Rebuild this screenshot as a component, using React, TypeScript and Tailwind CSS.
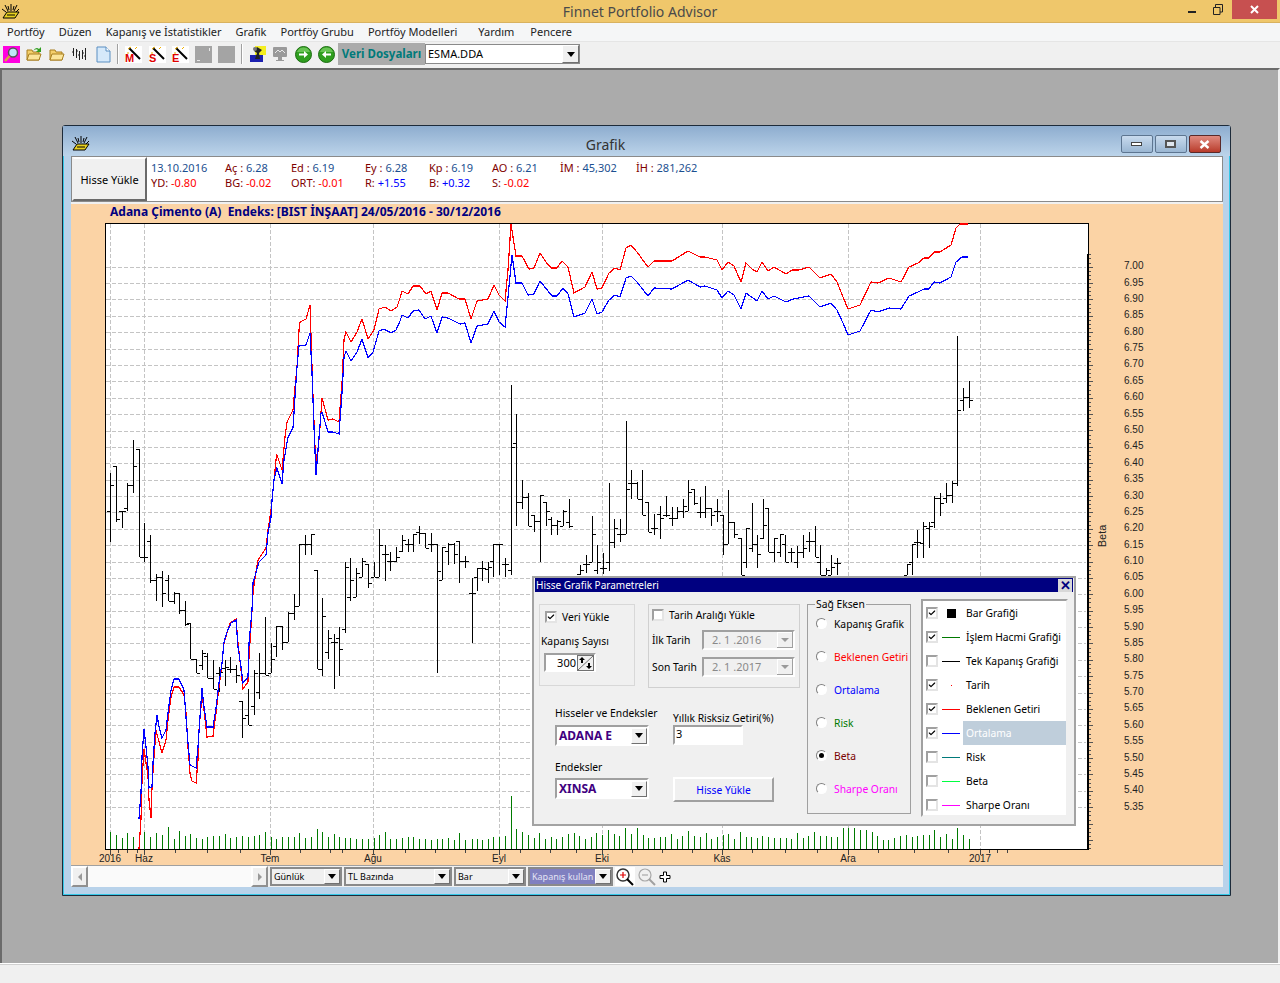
import React from 'react'
import { Check } from 'lucide-react'

const FONT = "font-['Roboto',sans-serif]"
const TITLE_FONT = "font-['Noto_Sans',sans-serif]"

const menus = ['Portföy', 'Düzen', 'Kapanış ve İstatistikler', 'Grafik', 'Portföy Grubu', 'Portföy Modelleri', 'Yardım', 'Pencere']

// [x, top, bottom, open (left tick), close (right tick)]
const bars: number[][] = [
  [110, 473, 542, 511, 485], [116, 466, 522, 466, 519], [122, 511, 528, 511, 511], [127, 483, 511, 508, 485],
  [133, 440, 493, 485, 466], [139, 449, 557, 449, 557], [144, 523, 562, 557, 557], [150, 535, 583, 541, 580],
  [156, 574, 601, 580, 577], [162, 571, 607, 577, 593], [168, 575, 601, 580, 601], [174, 592, 604, 601, 593],
  [179, 593, 614, 593, 610], [185, 601, 626, 610, 624], [190, 623, 659, 623, 659], [196, 659, 673, 659, 673],
  [202, 650, 670, 665, 653], [207, 653, 678, 656, 678], [213, 660, 689, 678, 689], [219, 667, 692, 673, 672],
  [225, 660, 686, 668, 667], [230, 657, 673, 669, 669], [236, 665, 683, 669, 675], [242, 701, 738, 701, 718],
  [248, 689, 725, 715, 725], [254, 670, 715, 706, 673], [259, 653, 699, 692, 673], [265, 617, 675, 673, 675],
  [271, 643, 673, 673, 659], [276, 626, 657, 646, 626], [282, 626, 650, 626, 642], [288, 612, 642, 642, 613],
  [294, 594, 620, 613, 606], [299, 544, 606, 606, 544], [305, 535, 555, 544, 544], [311, 534, 555, 544, 534],
  [317, 570, 669, 570, 669], [322, 598, 676, 669, 616], [328, 630, 659, 652, 638], [334, 634, 689, 642, 642],
  [339, 627, 676, 638, 649], [345, 562, 633, 629, 567], [350, 558, 601, 597, 580], [356, 568, 597, 597, 573],
  [362, 558, 577, 577, 561], [368, 564, 588, 564, 583], [374, 562, 577, 577, 577], [379, 529, 577, 577, 545],
  [385, 545, 581, 554, 554], [390, 552, 571, 561, 561], [396, 547, 562, 561, 557], [402, 535, 552, 551, 540],
  [408, 539, 552, 544, 544], [413, 534, 552, 544, 534], [419, 526, 544, 532, 533], [425, 533, 548, 533, 548],
  [431, 533, 552, 544, 544], [437, 544, 673, 544, 571], [442, 547, 580, 580, 547], [448, 543, 565, 551, 544],
  [454, 543, 564, 544, 554], [459, 541, 583, 541, 561], [465, 556, 568, 561, 561], [472, 578, 643, 593, 593],
  [477, 568, 591, 577, 568], [482, 561, 581, 568, 568], [488, 562, 583, 569, 567], [493, 544, 577, 561, 544],
  [499, 544, 575, 544, 544], [505, 558, 577, 564, 564], [511, 385, 575, 570, 447], [516, 414, 526, 443, 502],
  [522, 480, 509, 502, 497], [528, 493, 526, 497, 526], [534, 515, 532, 515, 521], [540, 495, 562, 521, 495],
  [546, 502, 526, 502, 511], [551, 517, 535, 519, 525], [557, 520, 535, 525, 521], [563, 510, 526, 526, 511],
  [569, 499, 528, 522, 526], [580, 565, 575, 574, 570], [586, 555, 573, 564, 564], [592, 516, 562, 562, 534],
  [597, 545, 574, 570, 562], [603, 553, 574, 568, 568], [609, 483, 571, 562, 542], [614, 519, 548, 542, 528],
  [620, 519, 542, 534, 534], [626, 421, 534, 534, 489], [631, 470, 499, 483, 483], [637, 482, 499, 483, 499],
  [642, 470, 515, 499, 515], [648, 502, 532, 502, 532], [654, 514, 535, 528, 528], [660, 506, 539, 514, 518],
  [666, 496, 517, 515, 515], [672, 507, 526, 518, 518], [677, 507, 519, 518, 511], [683, 499, 518, 511, 506],
  [688, 480, 511, 511, 492], [694, 489, 505, 489, 503], [700, 497, 518, 512, 512], [705, 486, 518, 512, 508],
  [711, 508, 526, 508, 515], [717, 499, 522, 511, 511], [723, 515, 555, 515, 544], [728, 490, 544, 544, 522],
  [734, 522, 538, 522, 534], [741, 538, 575, 538, 575], [746, 528, 568, 562, 528], [752, 503, 552, 548, 544],
  [757, 535, 568, 544, 554], [763, 499, 539, 538, 525], [768, 508, 552, 508, 552], [774, 538, 562, 552, 538],
  [780, 534, 557, 552, 534], [785, 535, 562, 544, 562], [791, 548, 562, 552, 552], [797, 546, 568, 562, 552],
  [803, 535, 558, 552, 548], [809, 532, 552, 541, 541], [815, 526, 557, 541, 557], [820, 545, 575, 562, 575],
  [826, 568, 575, 575, 570], [831, 555, 575, 575, 567], [837, 558, 575, 563, 563], [907, 564, 575, 575, 564],
  [912, 544, 575, 562, 544], [917, 530, 558, 542, 542], [923, 522, 558, 543, 526], [929, 522, 548, 528, 526],
  [934, 496, 528, 522, 498], [940, 493, 516, 498, 503], [946, 483, 503, 498, 495], [952, 481, 503, 495, 483],
  [957, 336, 486, 483, 410], [963, 388, 411, 400, 397], [969, 381, 408, 397, 400],
]

const red: number[][] = [
  [139, 849], [141, 819], [142, 780], [144, 749], [146, 763], [148, 776], [149, 800], [151, 818], [152, 787], [154, 757], [156, 730], [158, 738], [162, 753], [166, 740], [168, 720], [171, 697], [174, 687], [179, 687], [184, 695], [186, 713], [188, 747], [190, 773], [192, 781], [196, 783], [198, 760], [199, 730], [202, 695], [204, 710], [207, 737], [213, 736], [216, 713], [219, 687], [222, 663], [224, 643], [227, 633], [230, 623], [236, 619], [238, 643], [241, 670], [243, 689], [248, 682], [249, 657], [251, 627], [253, 593], [255, 578], [258, 560], [266, 548], [268, 530], [271, 510], [273, 490], [276, 460], [277, 455], [282, 470], [285, 437], [287, 422], [293, 410], [295, 387], [297, 367], [299, 330], [300, 322], [306, 319], [310, 305], [312, 367], [313, 397], [315, 447], [317, 463], [320, 427], [322, 398], [328, 420], [333, 419], [339, 422], [342, 383], [344, 340], [346, 332], [351, 342], [357, 332], [362, 319], [368, 339], [374, 330], [379, 309], [385, 307], [391, 311], [397, 307], [400, 298], [402, 291], [408, 294], [413, 286], [420, 286], [426, 294], [431, 291], [437, 310], [442, 293], [448, 293], [459, 299], [465, 299], [471, 319], [477, 301], [488, 299], [494, 285], [499, 295], [505, 301], [508, 270], [511, 224], [516, 256], [522, 256], [529, 269], [534, 268], [540, 253], [546, 262], [551, 268], [557, 268], [562, 261], [568, 267], [574, 293], [585, 287], [592, 272], [597, 289], [602, 288], [609, 273], [615, 268], [620, 270], [626, 248], [631, 245], [637, 252], [648, 267], [654, 261], [660, 261], [672, 261], [688, 251], [700, 257], [705, 257], [717, 260], [722, 270], [728, 262], [734, 266], [741, 282], [746, 263], [752, 269], [757, 272], [762, 262], [768, 271], [774, 267], [786, 274], [792, 270], [799, 270], [809, 267], [820, 278], [831, 274], [837, 282], [843, 297], [848, 309], [860, 305], [871, 282], [878, 283], [889, 278], [901, 282], [909, 267], [918, 263], [924, 258], [929, 258], [934, 252], [940, 252], [951, 245], [956, 228], [960, 224], [968, 224],
]

const blue: number[][] = [
  [139, 819], [141, 793], [142, 757], [144, 729], [146, 747], [148, 767], [149, 788], [152, 787], [153, 763], [155, 733], [157, 715], [159, 727], [162, 738], [166, 730], [168, 713], [171, 690], [174, 679], [179, 679], [184, 690], [186, 717], [188, 743], [190, 765], [196, 768], [198, 747], [200, 717], [202, 688], [204, 707], [207, 727], [213, 727], [216, 708], [219, 683], [222, 663], [224, 642], [227, 632], [231, 623], [236, 620], [238, 647], [241, 667], [243, 683], [248, 677], [249, 643], [252, 610], [253, 583], [259, 562], [266, 555], [268, 533], [271, 517], [272, 500], [274, 480], [277, 468], [282, 484], [284, 460], [288, 437], [293, 428], [295, 397], [297, 367], [299, 346], [306, 345], [310, 333], [312, 373], [314, 427], [316, 475], [318, 450], [321, 413], [322, 412], [328, 432], [333, 432], [339, 434], [342, 393], [344, 357], [346, 351], [351, 361], [357, 352], [362, 339], [368, 358], [373, 352], [379, 331], [384, 329], [391, 333], [396, 330], [400, 321], [402, 315], [408, 318], [413, 311], [419, 310], [425, 319], [431, 316], [437, 333], [442, 317], [448, 318], [460, 324], [465, 323], [471, 343], [477, 326], [488, 324], [494, 311], [499, 322], [505, 327], [508, 297], [512, 255], [516, 283], [522, 283], [528, 295], [534, 294], [540, 281], [552, 296], [557, 296], [563, 288], [568, 294], [574, 317], [585, 313], [592, 299], [597, 314], [602, 312], [609, 300], [615, 295], [620, 297], [626, 278], [631, 276], [637, 282], [648, 296], [654, 288], [672, 289], [688, 280], [700, 287], [705, 286], [717, 290], [722, 298], [728, 291], [734, 295], [741, 309], [746, 293], [757, 301], [762, 291], [768, 299], [774, 296], [786, 302], [793, 299], [809, 296], [820, 307], [831, 303], [837, 310], [843, 323], [848, 335], [860, 331], [871, 310], [878, 312], [889, 308], [901, 309], [909, 296], [918, 292], [924, 289], [929, 289], [934, 282], [940, 283], [951, 277], [956, 262], [962, 257], [968, 257],
]

// [x, top of the volume bar]
const volumes: number[][] = [
  [110, 832], [116, 835], [122, 838], [127, 833], [133, 837], [139, 837], [144, 832], [150, 837], [156, 833], [162, 835], [168, 827], [174, 839], [179, 831], [185, 836], [190, 834], [196, 838], [202, 839], [207, 837], [213, 836], [219, 836], [225, 834], [230, 838], [236, 837], [242, 836], [248, 837], [254, 836], [259, 835], [265, 832], [271, 837], [276, 839], [282, 837], [288, 837], [294, 837], [299, 833], [305, 838], [311, 837], [317, 829], [322, 832], [328, 837], [334, 834], [339, 837], [345, 838], [350, 838], [356, 839], [362, 839], [368, 839], [374, 838], [379, 835], [385, 832], [390, 839], [396, 839], [402, 838], [408, 837], [413, 837], [419, 839], [425, 839], [431, 840], [437, 839], [442, 839], [448, 838], [454, 840], [459, 833], [465, 840], [472, 839], [477, 839], [482, 840], [488, 839], [493, 837], [499, 837], [505, 836],
  [511, 796], [516, 829], [522, 832], [528, 835], [534, 838], [539, 833], [545, 839], [551, 837], [556, 839], [562, 837], [568, 834], [574, 833], [579, 836], [585, 839], [591, 837], [596, 833], [602, 835], [608, 830], [614, 834], [619, 836], [625, 828], [631, 834], [637, 828], [643, 835], [648, 838], [654, 838], [660, 837], [665, 837], [671, 834], [677, 839], [682, 836], [688, 831], [694, 836], [700, 837], [706, 833], [711, 839], [717, 837], [723, 835], [728, 834], [734, 839], [740, 832], [746, 837], [751, 837], [757, 838], [762, 836], [768, 837], [774, 838], [780, 838], [786, 838], [791, 839], [797, 833], [803, 838], [808, 836], [814, 832], [820, 836], [826, 836], [831, 837], [837, 837], [843, 828], [848, 828], [854, 828], [860, 830], [866, 830], [872, 832], [877, 836], [883, 840], [888, 840], [894, 838], [900, 836], [906, 835], [912, 837], [917, 836], [923, 835], [929, 835], [934, 830], [940, 837], [946, 834], [952, 839], [957, 828], [963, 835], [969, 839],
]

const gridY = Array.from({ length: 34 }, (_, i) => 266.7 + i * 16.38)
const gridX = [110, 144, 270, 373, 499, 602, 722, 848, 980]
const minorX = [118, 127, 137, 175, 207, 240, 300, 330, 342, 405, 435, 465, 520, 550, 576, 632, 662, 692, 752, 785, 817, 878, 914, 948, 989, 997, 1007]
const months: [string, number][] = [['2016', 110], ['Haz', 144], ['Tem', 270], ['Ağu', 373], ['Eyl', 499], ['Eki', 602], ['Kas', 722], ['Ara', 848], ['2017', 980]]

const toPoints = (pts: number[][]) => pts.map((p) => p.join(',')).join(' ')

function GoldLogo({ size = 18 }: { size?: number }) {
  return (
    <svg width={size} height={size} viewBox="0 0 18 18">
      <path d="M1 15 L5 9 L17 9 L13 15 Z" fill="#e8d020" stroke="#000" strokeWidth="1" />
      <path d="M5 12 L13 12" stroke="#000" strokeWidth="1" />
      <path d="M9 8 L9 1 M6 8 L3 2 M12 8 L15 2 M4 9 L0 6 M14 9 L17 6 M7 7 L6 3 M11 7 L12 3" stroke="#000" strokeWidth="1" />
    </svg>
  )
}

function Wand({ letter }: { letter: string }) {
  return (
    <svg width="17" height="17" viewBox="0 0 17 17" className="bg-white">
      <path d="M4 2 L15 13" stroke="#000" strokeWidth="2" />
      <path d="M3 3 L6 1 M10 3 L12 1 M2 7 L4 7" stroke="#f0b000" strokeWidth="1" />
      <text x="0" y="16" fontSize="11" fontWeight="700" fill="#e00000" fontFamily="Liberation Sans">{letter}</text>
    </svg>
  )
}

function CircleArrow({ left }: { left?: boolean }) {
  return (
    <svg width="17" height="17" viewBox="0 0 17 17">
      <circle cx="8.5" cy="8.5" r="8" fill="#2f9e1f" stroke="#1d6d12" />
      <path d="M2 6 A7 7 0 0 1 15 6 Z" fill="#7fd36a" opacity="0.7" />
      <path d={left ? 'M13 7.5 H8 V5 L4 8.5 L8 12 V9.5 H13 Z' : 'M4 7.5 H9 V5 L13 8.5 L9 12 V9.5 H4 Z'} fill="#fff" />
    </svg>
  )
}

function Folder({ arrow }: { arrow?: boolean }) {
  return (
    <svg width="16" height="16" viewBox="0 0 16 16">
      <path d="M1 4 H6 L7 6 H13 V14 H1 Z" fill="#f4cf6b" stroke="#a87f20" />
      <path d="M3 8 H15 L13 14 H1 Z" fill="#fbe59a" stroke="#a87f20" />
      {arrow && <path d="M7 5 Q10 0 13 3 L15 1 V6 H10 L12 4 Q10 2 7 5 Z" fill="#2f9e1f" />}
    </svg>
  )
}

function Toolbar() {
  return (
    <div className="flex h-[26px] items-center bg-[#f0f0f0] pb-[2px] pl-[3px]">
      <svg width="17" height="17" viewBox="0 0 17 17" className="bg-[#ff00e0]">
        <circle cx="10" cy="6.5" r="4.5" fill="#bfe4f7" stroke="#555" strokeWidth="1.5" />
        <path d="M6.5 10 L2 15" stroke="#d9a441" strokeWidth="2.5" />
      </svg>
      <div className="ml-[6px]"><Folder arrow /></div>
      <div className="ml-[7px]"><Folder /></div>
      <svg width="16" height="16" viewBox="0 0 16 16" className="ml-[7px]">
        <path d="M1.5 2 V10 M0 6 H1.5 M4.5 3 V12 M4.5 5 H6 M7.5 5 V14 M6 9 H7.5 M10.5 4 V13 M10.5 7 H12 M13.5 2 V14 M12 10 H13.5" stroke="#222" strokeWidth="1" />
      </svg>
      <svg width="15" height="17" viewBox="0 0 15 17" className="ml-[8px]">
        <path d="M1 1 H10 L14 5 V16 H1 Z" fill="#d6e9fa" stroke="#5b8fc2" />
        <path d="M10 1 V5 H14" fill="#fff" stroke="#5b8fc2" />
      </svg>
      <div className="ml-[6px] h-[20px] w-[2px] border-l border-[#a0a0a0] bg-white" />
      <div className="ml-[6px]"><Wand letter="M" /></div>
      <div className="ml-[7px]"><Wand letter="S" /></div>
      <div className="ml-[6px]"><Wand letter="E" /></div>
      <div className="ml-[6px] flex h-[17px] w-[17px] items-center justify-center bg-[#a4a4a4]">
        <svg width="13" height="13" viewBox="0 0 13 13"><path d="M0 13 L3 13 M13 0 V3" stroke="#fff" strokeWidth="1.5" /></svg>
      </div>
      <div className="ml-[6px] h-[17px] w-[17px] bg-[#a4a4a4]" />
      <div className="ml-[6px] h-[20px] w-[2px] border-l border-[#a0a0a0] bg-white" />
      <svg width="18" height="18" viewBox="0 0 18 18" className="ml-[6px]">
        <rect x="6" y="1" width="11" height="9" fill="#f4ee20" />
        <rect x="1" y="10" width="13" height="7" fill="#1c20b0" />
        <path d="M8 2 L5 6 L8 8 L6 14 L11 14 L10 8 L13 5 Z" fill="#222" />
        <circle cx="6" cy="4" r="2" fill="#777" />
      </svg>
      <svg width="16" height="16" viewBox="0 0 16 16" className="ml-[5px]">
        <rect x="1" y="1" width="14" height="10" rx="1" fill="#9a9a9a" />
        <path d="M3 7 L6 4 L8 6 L10 4 L13 7" stroke="#e8e8e8" fill="none" />
        <path d="M6 11 H10 V14 H12 V15 H4 V14 H6 Z" fill="#9a9a9a" />
      </svg>
      <div className="ml-[7px]"><CircleArrow /></div>
      <div className="ml-[6px]"><CircleArrow left /></div>
      <div className="ml-[3px] flex h-[22px] w-[87px] items-center justify-center bg-[#ababab] text-[11.5px] font-bold text-[#007a7a]">Veri Dosyaları</div>
      <div className="flex h-[20px] w-[155px] items-center justify-between border border-[#8a8a8a] bg-white pl-[2px] text-[11px] text-black">
        <span>ESMA.DDA</span>
        <ComboArrow className="h-[18px] w-[17px]" />
      </div>
    </div>
  )
}

function ComboArrow({ className }: { className: string }) {
  return (
    <span className={`flex shrink-0 items-center justify-center border-t border-l border-t-white border-l-white border-r border-b border-r-[#707070] border-b-[#707070] bg-[#f0f0f0] ${className}`}>
      <span className="h-0 w-0 border-x-[4px] border-t-[5px] border-x-transparent border-t-black" />
    </span>
  )
}

function BarCombo({ w, label, purple }: { w: string; label: string; purple?: boolean }) {
  return (
    <div className={`flex h-[19px] items-center justify-between border-2 border-[#8a8a8a] pl-[2px] text-[9px] ${purple ? 'bg-[#8080c0] text-[#e4e4f4]' : 'bg-[#f0f0f0] text-black'} ${w}`}>
      <span className="whitespace-nowrap">{label}</span>
      <ComboArrow className="h-[15px] w-[16px]" />
    </div>
  )
}

function Chart() {
  return (
    <svg viewBox="71 222 1152 643" width="1152" height="643" className="block">
      <rect x="105.5" y="223.5" width="983" height="626" fill="#fff" stroke="#000" />
      <g stroke="#c4c4c4" strokeDasharray="4 2" shapeRendering="crispEdges">
        {gridY.map((y) => <line key={y} x1="106" x2="1086" y1={Math.round(y) + 0.5} y2={Math.round(y) + 0.5} />)}
        {gridX.map((x) => <line key={x} x1={x + 0.5} x2={x + 0.5} y1="224" y2="849" />)}
      </g>
      <g stroke="#007a00" shapeRendering="crispEdges">
        {volumes.map(([x, y]) => <line key={x} x1={x + 0.5} x2={x + 0.5} y1={y} y2="849" />)}
      </g>
      <g stroke="#000" shapeRendering="crispEdges" fill="none">
        {bars.map(([x, top, bot, open, close]) => (
          <path key={x} d={`M${x + 0.5} ${top} V${bot} M${x - 3} ${open + 0.5} H${x} M${x + 1} ${close + 0.5} H${x + 4}`} />
        ))}
      </g>
      <polyline points={toPoints(red)} fill="none" stroke="#ff0000" strokeWidth="1.2" shapeRendering="crispEdges" />
      <polyline points={toPoints(blue)} fill="none" stroke="#0000ff" strokeWidth="1.2" shapeRendering="crispEdges" />

      {/* right axis */}
      <line x1="1088" x2="1088" y1="254" y2="850" stroke="#000" strokeWidth="2" />
      <g stroke="#555" shapeRendering="crispEdges">
        {Array.from({ length: 146 }, (_, i) => {
          const y = Math.round(254.4 + i * 4.095) + 0.5
          return <line key={i} x1="1089" x2={i % 4 === 3 ? 1093 : 1091} y1={y} y2={y} />
        })}
      </g>
      <g fontFamily="Liberation Sans" fontSize="10" fill="#222">
        {gridY.map((y, i) => <text key={y} x="1124" y={y + 2.5}>{(7 - i * 0.05).toFixed(2)}</text>)}
        <text x="1106" y="536" fontSize="11" textAnchor="middle" transform="rotate(-90 1106 536)">Beta</text>
        {months.map(([m, x]) => <text key={m} x={x} y="862" textAnchor="middle">{m}</text>)}
      </g>
      {/* bottom axis */}
      <g stroke="#444" shapeRendering="crispEdges">
        {minorX.map((x) => <line key={x} x1={x + 0.5} x2={x + 0.5} y1="850" y2="853" />)}
        {gridX.map((x) => <line key={x} x1={x + 0.5} x2={x + 0.5} y1="850" y2="855" />)}
      </g>
    </svg>
  )
}

function CheckBox({ checked }: { checked?: boolean }) {
  return (
    <span className="flex h-[12px] w-[12px] shrink-0 items-center justify-center border-2 border-t-[#a0a0a0] border-l-[#a0a0a0] border-r-[#e4e4e4] border-b-[#e4e4e4] bg-white">
      {checked && <Check size={10} strokeWidth={3.5} className="text-black" />}
    </span>
  )
}

const radios = [
  { label: 'Kapanış Grafik', color: 'text-black' },
  { label: 'Beklenen Getiri', color: 'text-[#ff0000]' },
  { label: 'Ortalama', color: 'text-[#0000ff]' },
  { label: 'Risk', color: 'text-[#007a00]' },
  { label: 'Beta', color: 'text-[#7a0000]', on: true },
  { label: 'Sharpe Oranı', color: 'text-[#ff00ff]' },
]

const legend = [
  { label: 'Bar Grafiği', on: true, mark: 'square' },
  { label: 'İşlem Hacmi Grafiği', on: true, mark: 'bg-[#007a00]' },
  { label: 'Tek Kapanış Grafiği', mark: 'bg-black' },
  { label: 'Tarih', on: true, mark: 'dot' },
  { label: 'Beklenen Getiri', on: true, mark: 'bg-[#ff0000]' },
  { label: 'Ortalama', on: true, mark: 'bg-[#0000ff]', selected: true },
  { label: 'Risk', mark: 'bg-[#007a7a]' },
  { label: 'Beta', mark: 'bg-[#00ff40]' },
  { label: 'Sharpe Oranı', mark: 'bg-[#ff00ff]' },
]

function Sunken({ className, children }: { className: string; children?: React.ReactNode }) {
  return (
    <div className={`border-2 border-t-[#a0a0a0] border-l-[#a0a0a0] border-r-white border-b-white ${className}`}>{children}</div>
  )
}

function DateBox({ value }: { value: string }) {
  return (
    <Sunken className="flex h-[20px] w-[93px] items-center justify-between bg-[#f0f0f0] pl-[8px] text-[11px] text-[#8a8a8a]">
      <span>{value}</span>
      <span className="flex h-[16px] w-[16px] items-center justify-center bg-[#f0f0f0] shadow-[inset_-1px_-1px_0_#a0a0a0,inset_1px_1px_0_#fff]">
        <span className="h-0 w-0 border-x-[4px] border-t-[4px] border-x-transparent border-t-[#9a9a9a]" />
      </span>
    </Sunken>
  )
}

function DialogCombo({ value }: { value: string }) {
  return (
    <Sunken className="flex h-[21px] w-[94px] items-center justify-between bg-white pl-[2px] text-[12px] font-bold text-[#400080]">
      <span>{value}</span>
      <ComboArrow className="h-[16px] w-[16px]" />
    </Sunken>
  )
}

function Dialog() {
  return (
    <div className="absolute left-[461px] top-[372px] h-[250px] w-[544px] border-2 border-[#a3a3a3] bg-[#f0f0f0] text-[10.3px] leading-[14px] text-black">
      <div className="mx-[1px] flex h-[14px] items-center justify-between bg-[#000080] px-[1px] text-[10px] text-white">
        <span>Hisse Grafik Parametreleri</span>
        <span className="flex h-[13px] w-[14px] items-center justify-center bg-[#d8d8d8] text-[13px] font-bold leading-none text-[#000080]">✕</span>
      </div>
      <div className="flex pl-[5px] pt-[12px]">
        <div className="w-[268px] shrink-0">
          <div className="flex items-start gap-[13px]">
            <div className="h-[82px] w-[96px] border border-[#d8d8d8] pl-[1px] pt-[5px]">
              <div className="flex items-center gap-[4px] pl-[4px]"><CheckBox checked /><span className="pl-[1px]">Veri Yükle</span></div>
              <div className="mt-[10px]">Kapanış Sayısı</div>
              <div className="ml-[3px] mt-[5px] flex h-[19px] w-[52px] items-center border-2 border-t-[#a0a0a0] border-l-[#a0a0a0] border-r-white border-b-white bg-white">
                <span className="w-[30px] text-right text-[11px]">300</span>
                <svg width="17" height="16" viewBox="0 0 17 16" className="ml-[1px] shrink-0 bg-[#f0f0f0]">
                  <rect x="0.5" y="0.5" width="16" height="15" fill="none" stroke="#707070" />
                  <path d="M1 15 L16 1" stroke="#707070" />
                  <path d="M5 2 L2 5 H4 V8 H6 V5 H8 Z M12 14 L9 11 H11 V8 H13 V11 H15 Z" fill="#000" />
                </svg>
              </div>
            </div>
            <div className="h-[84px] w-[152px] border border-[#d0d0d0] pl-[3px] pt-[3px]">
              <div className="flex items-center gap-[5px]"><CheckBox /><span>Tarih Aralığı Yükle</span></div>
              <div className="mt-[8px] flex items-center">
                <span className="w-[50px] whitespace-nowrap">İlk Tarih</span><DateBox value="2. 1 .2016" />
              </div>
              <div className="mt-[7px] flex items-center">
                <span className="w-[50px] whitespace-nowrap">Son Tarih</span><DateBox value="2. 1 .2017" />
              </div>
            </div>
          </div>
          <div className="mt-[18px] flex pl-[16px]">
            <div className="w-[118px]">
              <div className="h-[14px]">Hisseler ve Endeksler</div>
              <div className="mt-[5px]"><DialogCombo value="ADANA E" /></div>
              <div className="mt-[14px] h-[14px]">Endeksler</div>
              <div className="mt-[4px]"><DialogCombo value="XINSA" /></div>
            </div>
            <div className="pt-[5px]">
              <div className="h-[14px]">Yıllık Risksiz Getiri(%)</div>
              <Sunken className="h-[20px] w-[70px] bg-white pl-[1px] text-[11px]">3</Sunken>
              <button className="mt-[32px] h-[25px] w-[101px] border-2 border-t-white border-l-white border-r-[#a0a0a0] border-b-[#a0a0a0] bg-[#f0f0f0] text-[#0000ff]">Hisse Yükle</button>
            </div>
          </div>
        </div>
        <div className="relative h-[210px] w-[104px] shrink-0 border border-[#a0a0a0] pl-[8px] pt-[2px]">
          <span className="absolute -top-[8px] left-[7px] bg-[#f0f0f0] px-[1px]">Sağ Eksen</span>
          {radios.map((r) => (
            <div key={r.label} className="flex h-[33px] items-center gap-[7px]">
              <span className="flex h-[11px] w-[11px] shrink-0 items-center justify-center rounded-full border border-t-[#808080] border-l-[#808080] border-r-white border-b-white bg-white">
                {r.on && <span className="h-[5px] w-[5px] rounded-full bg-black" />}
              </span>
              <span className={`whitespace-nowrap ${r.color}`}>{r.label}</span>
            </div>
          ))}
        </div>
        <div className="-mt-[5px] ml-[10px] h-[218px] w-[147px] shrink-0 border-2 border-t-[#a0a0a0] border-l-[#a0a0a0] border-r-[#f0f0f0] border-b-[#f0f0f0] bg-white">
          {legend.map((l) => (
            <div key={l.label} className="flex h-[24px] items-center pl-[3px]">
              <CheckBox checked={l.on} />
              <span className="flex w-[25px] shrink-0 justify-center pl-[1px]">
                {l.mark === 'square' ? <span className="h-[9px] w-[9px] bg-black" /> : l.mark === 'dot' ? <span className="h-px w-px bg-[#ff0000]" /> : <span className={`h-px w-[18px] ${l.mark}`} />}
              </span>
              <span className={`flex h-[24px] flex-1 items-center whitespace-nowrap pl-[3px] ${l.selected ? 'bg-[#bfcedb] text-white' : ''}`}>{l.label}</span>
            </div>
          ))}
        </div>
      </div>
    </div>
  )
}

function InfoStrip() {
  return (
    <div className="flex h-[46px] border border-[#8a8a8a] bg-white text-[11px] leading-[15px]">
      <button className="h-full w-[75px] shrink-0 border-2 border-t-white border-l-[#f0f0f0] border-r-[#6a6a6a] border-b-[#6a6a6a] bg-[#f0f0f0] text-[11px] text-black">Hisse Yükle</button>
      <div className="grid grid-cols-[74px_66px_74px_64px_63px_68px_76px_80px] content-start pl-[4px] pt-[3px]">
        <span className="text-[#1b4f90]">13.10.2016</span>
        <Info l="Aç : " v="6.28" />
        <Info l="Ed : " v="6.19" />
        <Info l="Ey : " v="6.28" />
        <Info l="Kp : " v="6.19" />
        <Info l="AO : " v="6.21" />
        <Info l="İM : " v="45,302" />
        <Info l="İH : " v="281,262" />
        <Info l="YD: " v="-0.80" color="text-[#ff0000]" />
        <Info l="BG: " v="-0.02" color="text-[#ff0000]" />
        <Info l="ORT: " v="-0.01" color="text-[#ff0000]" />
        <Info l="R: " v="+1.55" color="text-[#0000ff]" />
        <Info l="B: " v="+0.32" color="text-[#0000ff]" />
        <Info l="S: " v="-0.02" color="text-[#ff0000]" />
      </div>
    </div>
  )
}

function Info({ l, v, color = 'text-[#1b4f90]' }: { l: string; v: string; color?: string }) {
  return (
    <span className="whitespace-pre">
      <span className="text-[#800000]">{l}</span>
      <span className={color}>{v}</span>
    </span>
  )
}

function BottomBar() {
  return (
    <div className="flex h-[22px] items-center gap-[2px] border-t border-[#a0a0a0] bg-[#f0f0f0]">
      <div className="flex h-[21px] w-[197px] items-center justify-between bg-[#fafafa]">
        <span className="flex h-[21px] w-[17px] items-center justify-center border-2 border-t-white border-l-white border-r-[#909090] border-b-[#909090] bg-[#f0f0f0]">
          <span className="h-0 w-0 border-y-[4px] border-r-[4px] border-y-transparent border-r-[#999]" />
        </span>
        <span className="flex h-[21px] w-[17px] items-center justify-center border-2 border-t-white border-l-white border-r-[#909090] border-b-[#909090] bg-[#f0f0f0]">
          <span className="h-0 w-0 border-y-[4px] border-l-[4px] border-y-transparent border-l-[#999]" />
        </span>
      </div>
      <BarCombo w="w-[72px]" label="Günlük" />
      <BarCombo w="w-[108px]" label="TL Bazında" />
      <BarCombo w="w-[72px]" label="Bar" />
      <BarCombo w="w-[85px]" label="Kapanış kullan" purple />
      <svg width="20" height="19" viewBox="0 0 20 19" className="bg-white">
        <circle cx="8" cy="8" r="6" fill="#fff" stroke="#333" strokeWidth="1.5" />
        <path d="M5 8 H11 M8 5 V11" stroke="#e00000" strokeWidth="1.2" />
        <path d="M12 12 L18 18" stroke="#000" strokeWidth="2" />
      </svg>
      <svg width="20" height="19" viewBox="0 0 20 19">
        <circle cx="8" cy="8" r="6" fill="none" stroke="#a8a8a8" strokeWidth="1.2" />
        <path d="M5 8 H11" stroke="#a8a8a8" strokeWidth="1.2" />
        <path d="M12 12 L18 18" stroke="#a0a0a0" strokeWidth="2" />
      </svg>
      <svg width="12" height="12" viewBox="0 0 12 12">
        <path d="M4.5 1 H7.5 V4.5 H11 V7.5 H7.5 V11 H4.5 V7.5 H1 V4.5 H4.5 Z" fill="#fff" stroke="#000" />
      </svg>
    </div>
  )
}

export default function App() {
  return (
    <div className={`flex h-[983px] w-[1280px] flex-col overflow-hidden bg-[#ababab] ${FONT}`}>
      {/* main title */}
      <div className="flex h-[23px] shrink-0 items-start justify-between border-b border-[#d9b25f] bg-[#efc76b]">
        <div className="w-[120px] pl-[2px] pt-[3px]"><GoldLogo /></div>
        <div className={`pt-[2px] text-[14px] leading-[20px] text-[#4a4a4a] ${TITLE_FONT}`}>Finnet Portfolio Advisor</div>
        <div className="flex w-[120px] items-start justify-end pr-[3px]">
          <span className="mr-[17px] mt-[11px] h-[2px] w-[8px] bg-[#222]" />
          <svg width="10" height="11" viewBox="0 0 10 11" className="mr-[9px] mt-[4px]">
            <path d="M0.5 3.5 H7 V10.5 H0.5 Z M2.5 3.5 V0.5 H9.5 V8 H7" fill="none" stroke="#222" />
          </svg>
          <span className="flex h-[19px] w-[45px] items-center justify-center bg-[#c75050]">
            <svg width="9" height="9" viewBox="0 0 9 9"><path d="M1 1 L8 8 M8 1 L1 8" stroke="#fff" strokeWidth="2" /></svg>
          </span>
        </div>
      </div>

      <div className="flex h-[18px] shrink-0 items-center gap-[14px] bg-[#f5f6f7] pl-[7px] pt-[1px] text-[11px] text-[#222]">
        {menus.map((m) => <span key={m} className={m === 'Yardım' ? 'ml-[7px]' : m === 'Pencere' ? 'ml-[2px]' : ''}>{m}</span>)}
      </div>
      <div className="border-t border-[#e5e5e5]"><Toolbar /></div>

      {/* mdi area */}
      <div className="min-h-0 flex-1 border-t-2 border-l-2 border-r-2 border-t-[#6b6b6b] border-l-[#6b6b6b] border-r-[#f0f0f0] pl-[60px] pt-[55px]">
        <div className="h-[771px] w-[1169px] rounded-t-[3px] border border-[#1d2b3a] bg-[#b8d2ea] shadow-[inset_0_0_0_1px_#35c8e8]">
          <div className={`flex h-[30px] items-center justify-between bg-gradient-to-b from-[#8eadcf] to-[#bcd4ea] px-[9px] pt-[6px] ${TITLE_FONT}`}>
            <GoldLogo />
            <span className="text-[14px] text-[#333]">Grafik</span>
            <div className="flex items-center gap-[2px]">
              <span className="flex h-[18px] w-[32px] items-center justify-center rounded-[2px] border border-[#5d7590] bg-gradient-to-b from-[#c9dbee] to-[#9ab6d2]">
                <span className="h-[4px] w-[11px] border border-[#444] bg-white" />
              </span>
              <span className="flex h-[18px] w-[32px] items-center justify-center rounded-[2px] border border-[#5d7590] bg-gradient-to-b from-[#c9dbee] to-[#9ab6d2]">
                <span className="h-[8px] w-[11px] border-2 border-[#555] bg-[#dfe6ee]" />
              </span>
              <span className="flex h-[18px] w-[32px] items-center justify-center rounded-[2px] border border-[#5a2a2a] bg-gradient-to-b from-[#e08a80] to-[#b83a2a]">
                <svg width="11" height="9" viewBox="0 0 11 9"><path d="M1.5 1 L9.5 8 M9.5 1 L1.5 8" stroke="#fff" strokeWidth="2.4" /></svg>
              </span>
            </div>
          </div>
          <div className="ml-[8px] mr-[7px] bg-[#f0f0f0]">
            <InfoStrip />
            <div className="relative mt-[2px] h-[661px] bg-[#fbd3a5]">
              <div className={`h-[18px] pl-[39px] text-[12px] font-bold leading-[16px] text-[#000080] ${TITLE_FONT}`}>
                Adana Çimento (A)&nbsp; Endeks: [BIST İNŞAAT] 24/05/2016 - 30/12/2016
              </div>
              <Chart />
              <Dialog />
            </div>
            <BottomBar />
          </div>
        </div>
      </div>

      <div className="h-[20px] shrink-0 border-t border-white bg-[#f0f0f0] shadow-[inset_0_1px_0_#d0d0d0]" />
    </div>
  )
}
